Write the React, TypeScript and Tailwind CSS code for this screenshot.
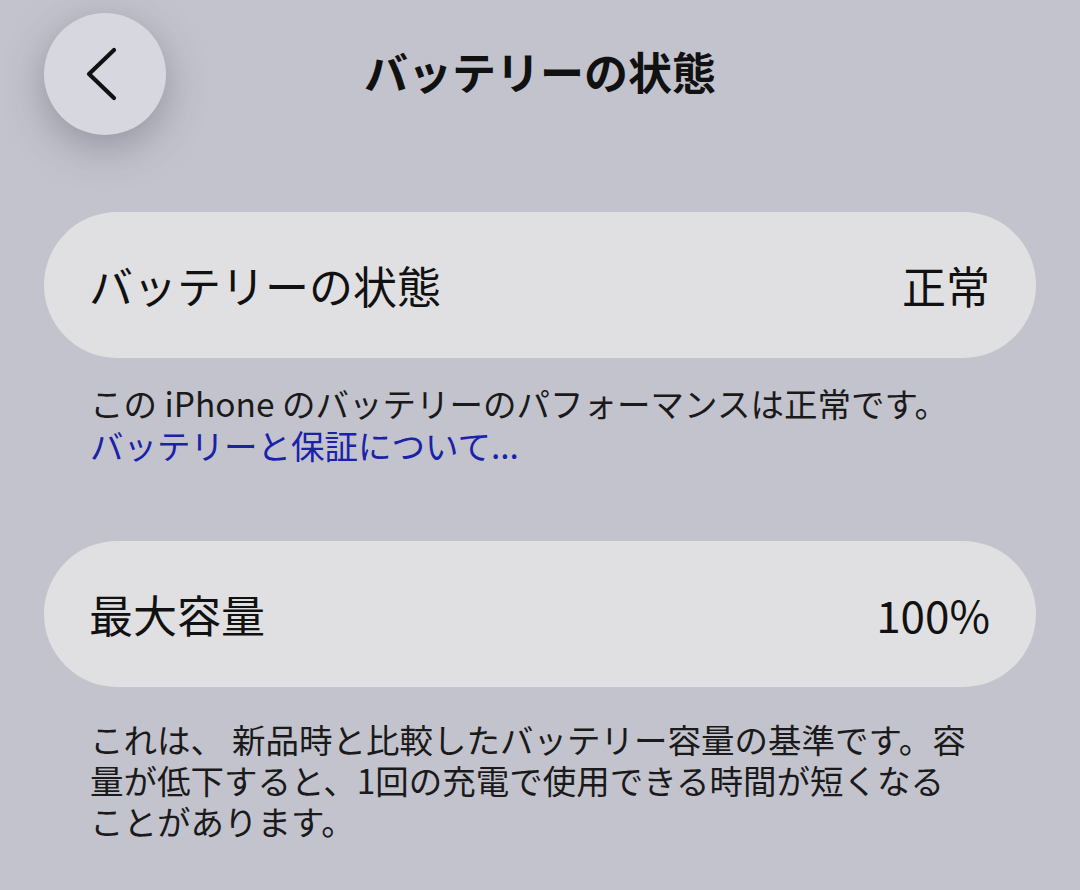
import React from 'react';

const font = { fontFamily: '"Noto Sans CJK JP", "Noto Sans", sans-serif' };

function BackButton() {
  return (
    <button className="flex h-[122px] w-[122px] items-center justify-center rounded-full bg-[#d7d7e0] shadow-[0_12px_40px_rgba(60,60,80,0.35)]">
      <svg width="40" height="56" viewBox="0 0 40 56" fill="none">
        <path d="M29 4 L4 28 L29 52" stroke="#111" strokeWidth="4.2" strokeLinecap="round" strokeLinejoin="round" />
      </svg>
    </button>
  );
}

function Row({ label, value }: { label: string; value: string }) {
  return (
    <div className="flex h-[146px] items-center justify-between rounded-full bg-[#e0e0e2] pl-[45px] pr-[46px]">
      <span className="text-[44px] leading-none text-[#111]">{label}</span>
      <span className="text-[44px] leading-none text-[#111]">{value}</span>
    </div>
  );
}

export default function App() {
  return (
    <div className="h-[890px] w-[1080px] overflow-hidden bg-[#c3c3cd]" style={font}>
      {/* Header */}
      <div className="relative flex h-[147px] items-center justify-center pt-[13px]">
        <div className="absolute left-[44px] top-[13px]">
          <BackButton />
        </div>
        <h1 className="-mt-[18px] text-[44px] font-bold leading-none text-[#111]">バッテリーの状態</h1>
      </div>

      <div className="px-[44px] pt-[65px]">
        <Row label="バッテリーの状態" value="正常" />
        <div className="px-[46px] pt-[24px] text-[33.5px] leading-[42px] text-[#1a1a1a]">
          <div>この iPhone のバッテリーのパフォーマンスは正常です。</div>
          <div className="text-[#1a22a8]">バッテリーと保証について...</div>
        </div>

        <div className="pt-[75px]">
          <Row label="最大容量" value="100%" />
        </div>
        <div className="px-[46px] pt-[31px] text-[33.5px] leading-[41px] text-[#1a1a1a]">
          <div>
            これは、<span className="ml-[8px]">新品時と比較したバッテリー容量の基準です。容</span>
          </div>
          <div>量が低下すると、1回の充電で使用できる時間が短くなる</div>
          <div>ことがあります。</div>
        </div>
      </div>
    </div>
  );
}
